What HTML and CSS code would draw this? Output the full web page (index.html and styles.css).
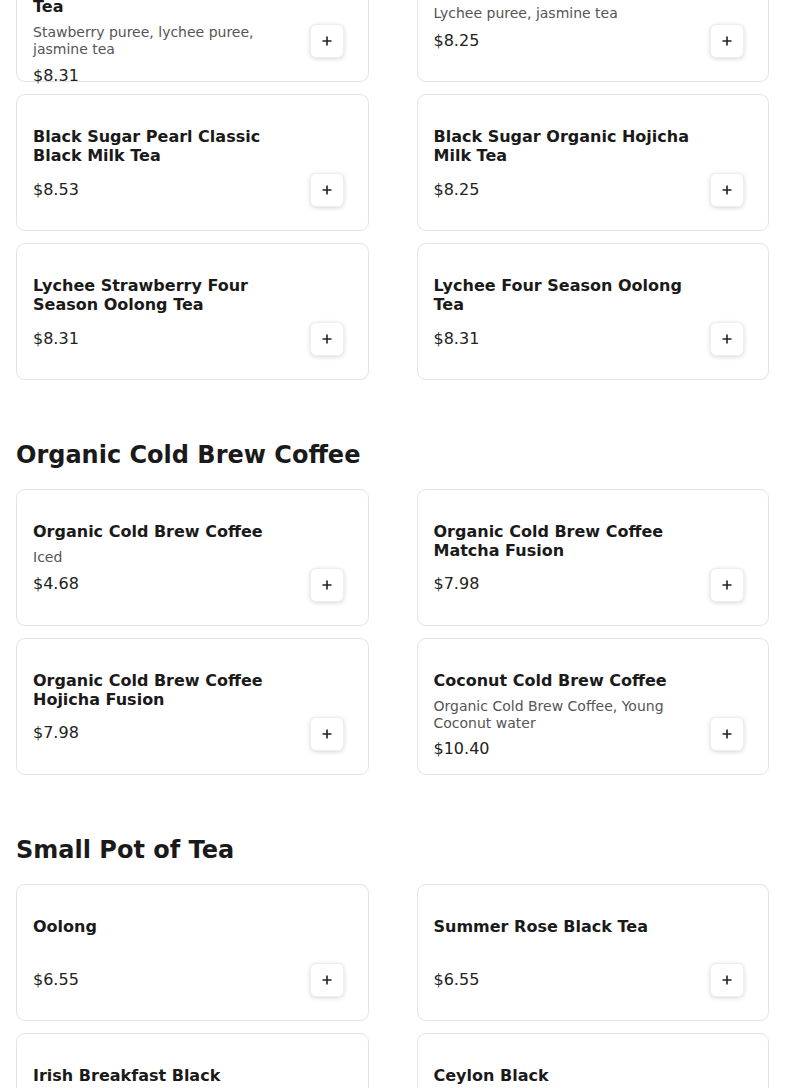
FILE: index.html
```html
<!DOCTYPE html>
<html lang="en">
<head>
<meta charset="utf-8">
<title>Menu</title>
<link rel="stylesheet" href="styles.css">
</head>
<body>
<main class="menu">
  <section class="category">
    <h2 class="category-title">Fruit Tea</h2>
    <div class="grid">
      <article class="item">
        <div class="info">
          <div class="text">
            <h3 class="name">Strawberry Lychee Jasmine Tea</h3>
            <p class="desc">Stawberry puree, lychee puree, jasmine tea</p>
          </div>
          <p class="price">$8.31</p>
        </div>
        <button class="add" aria-label="Add"><svg viewBox="0 0 12 12" width="12" height="12"><path d="M6 1.5v9M1.5 6h9" stroke="#222" stroke-width="1.6" fill="none"/></svg></button>
      </article>
      <article class="item">
        <div class="info">
          <div class="text">
            <h3 class="name">Lychee Jasmine Tea</h3>
            <p class="desc">Lychee puree, jasmine tea</p>
          </div>
          <p class="price">$8.25</p>
        </div>
        <button class="add" aria-label="Add"><svg viewBox="0 0 12 12" width="12" height="12"><path d="M6 1.5v9M1.5 6h9" stroke="#222" stroke-width="1.6" fill="none"/></svg></button>
      </article>
      <article class="item">
        <div class="info">
          <div class="text">
            <h3 class="name">Black Sugar Pearl Classic Black Milk Tea</h3>
          </div>
          <p class="price">$8.53</p>
        </div>
        <button class="add" aria-label="Add"><svg viewBox="0 0 12 12" width="12" height="12"><path d="M6 1.5v9M1.5 6h9" stroke="#222" stroke-width="1.6" fill="none"/></svg></button>
      </article>
      <article class="item">
        <div class="info">
          <div class="text">
            <h3 class="name">Black Sugar Organic Hojicha Milk Tea</h3>
          </div>
          <p class="price">$8.25</p>
        </div>
        <button class="add" aria-label="Add"><svg viewBox="0 0 12 12" width="12" height="12"><path d="M6 1.5v9M1.5 6h9" stroke="#222" stroke-width="1.6" fill="none"/></svg></button>
      </article>
      <article class="item">
        <div class="info">
          <div class="text">
            <h3 class="name">Lychee Strawberry Four Season Oolong Tea</h3>
          </div>
          <p class="price">$8.31</p>
        </div>
        <button class="add" aria-label="Add"><svg viewBox="0 0 12 12" width="12" height="12"><path d="M6 1.5v9M1.5 6h9" stroke="#222" stroke-width="1.6" fill="none"/></svg></button>
      </article>
      <article class="item">
        <div class="info">
          <div class="text">
            <h3 class="name">Lychee Four Season Oolong Tea</h3>
          </div>
          <p class="price">$8.31</p>
        </div>
        <button class="add" aria-label="Add"><svg viewBox="0 0 12 12" width="12" height="12"><path d="M6 1.5v9M1.5 6h9" stroke="#222" stroke-width="1.6" fill="none"/></svg></button>
      </article>
    </div>
  </section>

  <section class="category">
    <h2 class="category-title">Organic Cold Brew Coffee</h2>
    <div class="grid">
      <article class="item">
        <div class="info">
          <div class="text">
            <h3 class="name">Organic Cold Brew Coffee</h3>
            <p class="desc">Iced</p>
          </div>
          <p class="price">$4.68</p>
        </div>
        <button class="add" aria-label="Add"><svg viewBox="0 0 12 12" width="12" height="12"><path d="M6 1.5v9M1.5 6h9" stroke="#222" stroke-width="1.6" fill="none"/></svg></button>
      </article>
      <article class="item">
        <div class="info">
          <div class="text">
            <h3 class="name">Organic Cold Brew Coffee Matcha Fusion</h3>
          </div>
          <p class="price">$7.98</p>
        </div>
        <button class="add" aria-label="Add"><svg viewBox="0 0 12 12" width="12" height="12"><path d="M6 1.5v9M1.5 6h9" stroke="#222" stroke-width="1.6" fill="none"/></svg></button>
      </article>
      <article class="item">
        <div class="info">
          <div class="text">
            <h3 class="name">Organic Cold Brew Coffee Hojicha Fusion</h3>
          </div>
          <p class="price">$7.98</p>
        </div>
        <button class="add" aria-label="Add"><svg viewBox="0 0 12 12" width="12" height="12"><path d="M6 1.5v9M1.5 6h9" stroke="#222" stroke-width="1.6" fill="none"/></svg></button>
      </article>
      <article class="item">
        <div class="info">
          <div class="text">
            <h3 class="name">Coconut Cold Brew Coffee</h3>
            <p class="desc">Organic Cold Brew Coffee, Young Coconut water</p>
          </div>
          <p class="price">$10.40</p>
        </div>
        <button class="add" aria-label="Add"><svg viewBox="0 0 12 12" width="12" height="12"><path d="M6 1.5v9M1.5 6h9" stroke="#222" stroke-width="1.6" fill="none"/></svg></button>
      </article>
    </div>
  </section>

  <section class="category category-last">
    <h2 class="category-title">Small Pot of Tea</h2>
    <div class="grid">
      <article class="item">
        <div class="info">
          <div class="text">
            <h3 class="name">Oolong</h3>
          </div>
          <p class="price">$6.55</p>
        </div>
        <button class="add" aria-label="Add"><svg viewBox="0 0 12 12" width="12" height="12"><path d="M6 1.5v9M1.5 6h9" stroke="#222" stroke-width="1.6" fill="none"/></svg></button>
      </article>
      <article class="item">
        <div class="info">
          <div class="text">
            <h3 class="name">Summer Rose Black Tea</h3>
          </div>
          <p class="price">$6.55</p>
        </div>
        <button class="add" aria-label="Add"><svg viewBox="0 0 12 12" width="12" height="12"><path d="M6 1.5v9M1.5 6h9" stroke="#222" stroke-width="1.6" fill="none"/></svg></button>
      </article>
      <article class="item">
        <div class="info">
          <div class="text">
            <h3 class="name">Irish Breakfast Black</h3>
          </div>
          <p class="price">$6.55</p>
        </div>
        <button class="add" aria-label="Add"><svg viewBox="0 0 12 12" width="12" height="12"><path d="M6 1.5v9M1.5 6h9" stroke="#222" stroke-width="1.6" fill="none"/></svg></button>
      </article>
      <article class="item">
        <div class="info">
          <div class="text">
            <h3 class="name">Ceylon Black</h3>
          </div>
          <p class="price">$6.55</p>
        </div>
        <button class="add" aria-label="Add"><svg viewBox="0 0 12 12" width="12" height="12"><path d="M6 1.5v9M1.5 6h9" stroke="#222" stroke-width="1.6" fill="none"/></svg></button>
      </article>
    </div>
  </section>
</main>
</body>
</html>
```

FILE: styles.css
```css
* {
  box-sizing: border-box;
}

html, body {
  margin: 0;
  padding: 0;
  background: #ffffff;
}

body {
  font-family: "DejaVu Sans", Verdana, sans-serif;
  color: #1a1a1a;
  overflow: hidden;
}

.menu {
  padding: 0 16px;
  margin-top: -123px;
}

.category + .category {
  padding-top: 41px;
}

.category-title {
  margin: 20px 0 19px;
  font-size: 24px;
  line-height: 1.2;
  font-weight: 700;
  color: #1a1a1a;
}

.category-last .category-title {
  margin-bottom: 20px;
}

.grid {
  display: grid;
  grid-template-columns: 1fr 1fr;
  column-gap: 48px;
  row-gap: 12px;
}

.item {
  height: 137px;
  display: flex;
  gap: 8px;
  padding: 32px 24px 23px 16px;
  border: 1px solid #e3e3e3;
  border-radius: 9px;
  background: #fff;
}

.info {
  flex: 1;
  min-width: 0;
}

.text {
  min-height: 44.8px;
}

.name {
  margin: 0;
  font-size: 16px;
  line-height: 1.2;
  font-weight: 700;
  color: #1a1a1a;
}

.desc {
  margin: 8px 0 0;
  font-size: 14px;
  line-height: 1.2;
  color: #555555;
}

.price {
  margin: 8px 0 0;
  font-size: 16px;
  line-height: 1.2;
  color: #222222;
}

.add {
  align-self: flex-end;
  flex: none;
  width: 34px;
  height: 34px;
  padding: 0;
  display: flex;
  align-items: center;
  justify-content: center;
  border: 1px solid #eeeeee;
  border-radius: 6px;
  background: #ffffff;
  box-shadow: 0 1px 4px rgba(0, 0, 0, 0.16);
  cursor: pointer;
}
```
